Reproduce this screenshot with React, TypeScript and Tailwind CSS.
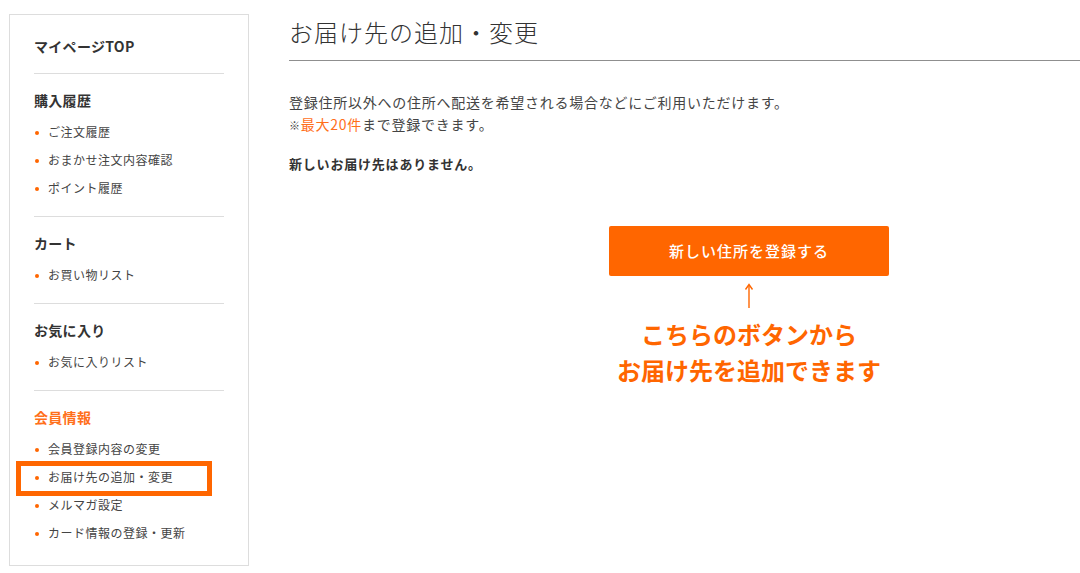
import React from "react";

const font = { fontFamily: '"Noto Sans CJK JP", "Noto Sans", sans-serif' };

type Section = { title: string; orange?: boolean; items: string[] };

const sections: Section[] = [
  { title: "購入履歴", items: ["ご注文履歴", "おまかせ注文内容確認", "ポイント履歴"] },
  { title: "カート", items: ["お買い物リスト"] },
  { title: "お気に入り", items: ["お気に入りリスト"] },
  {
    title: "会員情報",
    orange: true,
    items: ["会員登録内容の変更", "お届け先の追加・変更", "メルマガ設定", "カード情報の登録・更新"],
  },
];

function Item({ label, active }: { label: string; active?: boolean }) {
  return (
    <li className="relative flex h-[28px] items-center pl-[14px] text-[12px] tracking-[0.5px] text-[#444]">
      <span className="absolute left-[1px] top-[13px] h-[4px] w-[4px] rounded-full bg-[#ff6600]" />
      {label}
      {active && (
        <span className="pointer-events-none absolute left-[-18px] top-[-2px] h-[35px] w-[196px] border-[5px] border-[#ff6600]" />
      )}
    </li>
  );
}

export default function App() {
  return (
    <div className="h-[573px] w-[1080px] overflow-hidden bg-white" style={font}>
      <div className="flex w-[1300px] items-start pl-[9px] pt-[14px]">
        <aside className="w-[240px] shrink-0 border border-[#dddddd] px-[24px] pb-[18px]">
          <div className="pb-[17px] pt-[21px]">
            <h2 className="h-[20px] text-[14px] font-bold leading-[20px] tracking-[0.3px] text-[#333]">
              マイページTOP
            </h2>
          </div>
          {sections.map((s, i) => (
            <div
              key={s.title}
              className={`border-t border-[#dddddd] pt-[16px] ${i === sections.length - 1 ? "pb-0" : "pb-[14px]"}`}
            >
              <h3
                className={`h-[20px] text-[14px] font-bold leading-[20px] tracking-[0.3px] ${
                  s.orange ? "text-[#ff6f1a]" : "text-[#333]"
                }`}
              >
                {s.title}
              </h3>
              <ul className="mt-[8px]">
                {s.items.map((it) => (
                  <Item key={it} label={it} active={it === "お届け先の追加・変更"} />
                ))}
              </ul>
            </div>
          ))}
        </aside>

        <main className="ml-[40px] w-[920px] shrink-0 pt-[2px]">
          <h1 className="pb-[12px] text-[24px] font-light leading-[32px] tracking-[1px] text-[#333]">
            お届け先の追加・変更
          </h1>
          <div className="h-px bg-[#8f8f8f]" />
          <p className="mt-[30px] text-[14px] leading-[22px] tracking-[0.75px] text-[#444]">
            登録住所以外への住所へ配送を希望される場合などにご利用いただけます。
            <br />
            <span className="text-[11px] text-[#444]">※</span>
            <span className="text-[#ff6f1a]">最大20件</span>まで登録できます。
          </p>
          <p className="mt-[17px] text-[13px] font-bold leading-[22px] tracking-[0.8px] text-[#333]">
            新しいお届け先はありません。
          </p>
          <div className="mt-[51px] flex flex-col items-center">
            <button className="flex h-[50px] w-[280px] items-center justify-center rounded-[2px] bg-[#ff6600] text-[15px] font-medium tracking-[1px] text-white">
              新しい住所を登録する
            </button>
            <div className="flex h-[40px] items-center justify-center">
              <svg width="12" height="26" viewBox="0 0 12 26" fill="none">
                <path d="M6 25V2" stroke="#ff6600" strokeWidth="1.4" />
                <path d="M2.5 6.5L6 1.5L9.5 6.5" stroke="#ff6600" strokeWidth="1.4" fill="none" />
              </svg>
            </div>
            <div className="text-center text-[24px] font-bold leading-[36px] text-[#ff6600]">
              こちらのボタンから
              <br />
              お届け先を追加できます
            </div>
          </div>
        </main>
      </div>
    </div>
  );
}
